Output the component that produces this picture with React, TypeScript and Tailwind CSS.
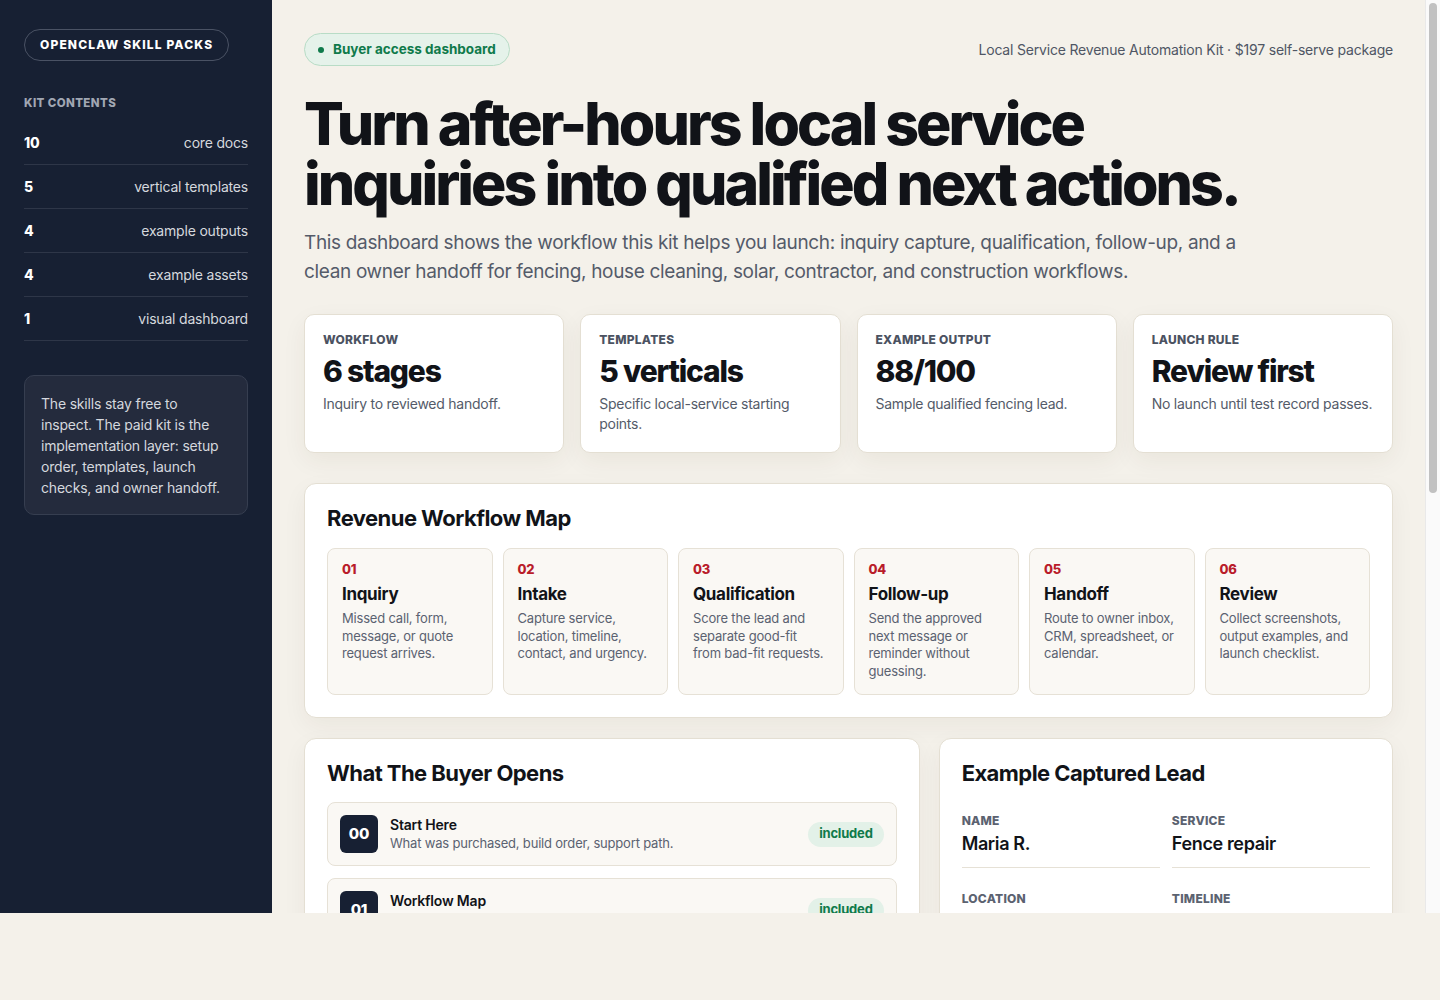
import React from "react";

const kit = [
  ["10", "core docs"],
  ["5", "vertical templates"],
  ["4", "example outputs"],
  ["4", "example assets"],
  ["1", "visual dashboard"],
];

const stats = [
  ["WORKFLOW", "6 stages", "Inquiry to reviewed handoff."],
  ["TEMPLATES", "5 verticals", "Specific local-service starting points."],
  ["EXAMPLE OUTPUT", "88/100", "Sample qualified fencing lead."],
  ["LAUNCH RULE", "Review first", "No launch until test record passes."],
];

const steps = [
  ["01", "Inquiry", "Missed call, form, message, or quote request arrives."],
  ["02", "Intake", "Capture service, location, timeline, contact, and urgency."],
  ["03", "Qualification", "Score the lead and separate good-fit from bad-fit requests."],
  ["04", "Follow-up", "Send the approved next message or reminder without guessing."],
  ["05", "Handoff", "Route to owner inbox, CRM, spreadsheet, or calendar."],
  ["06", "Review", "Collect screenshots, output examples, and launch checklist."],
];

const docs = [
  ["00", "Start Here", "What was purchased, build order, support path."],
  ["01", "Workflow Map", "The six stages from inquiry to reviewed handoff."],
  ["02", "Intake Fields", "Required fields for every captured request."],
  ["03", "Qualification Rules", "Scoring rubric for good-fit and bad-fit leads."],
  ["04", "Follow-up Scripts", "Approved messages and reminder timing."],
  ["05", "Owner Handoff", "Inbox, CRM, spreadsheet, or calendar routing."],
  ["06", "Vertical Templates", "Fencing, cleaning, solar, contractor, construction."],
  ["07", "Launch Checklist", "Test record, review pass, go-live steps."],
  ["08", "Example Outputs", "Sample scored leads and handoff notes."],
  ["09", "Support Path", "Where to ask questions after setup."],
];

const fields = [
  ["NAME", "Maria R."],
  ["SERVICE", "Fence repair"],
  ["LOCATION", "Austin, TX"],
  ["TIMELINE", "This week"],
  ["CONTACT", "Text preferred"],
  ["BUDGET", "$1,500–$3,000"],
  ["SOURCE", "Missed call"],
  ["SCORE", "88/100"],
];

export default function App() {
  return (
    <div className="min-h-[1000px] bg-[#f4f1ea] font-['Inter',sans-serif] tracking-[-0.012em] text-[#111318]">
      <div className="flex h-[913px]">
        <aside className="w-[272px] shrink-0 bg-[#172033] px-6 pt-[29px]">
          <div className="inline-flex h-8 items-center rounded-full border border-[#4a5264] px-[15px] text-[12px] font-extrabold tracking-[0.095em] text-white">
            OPENCLAW SKILL PACKS
          </div>
          <div className="mt-[34px] text-[11.5px] font-extrabold leading-4 tracking-[0.035em] text-[#a1a7b3]">
            KIT CONTENTS
          </div>
          <div className="mt-[10px]">
            {kit.map(([n, l]) => (
              <div key={l} className="flex h-11 items-center justify-between border-b border-[#2e3648] text-[14px] leading-5">
                <span className="font-extrabold text-white">{n}</span>
                <span className="text-[#d5d8de]">{l}</span>
              </div>
            ))}
          </div>
          <div className="mt-[34px] rounded-[10px] border border-[#363e50] bg-[#242b3d] px-4 pb-4 pt-[17px] text-[14px] leading-[21px] text-[#d5d8de]">
            The skills stay free to inspect. The paid kit is the implementation layer: setup order, templates, launch checks, and owner handoff.
          </div>
        </aside>

        <main className="min-w-0 flex-1 overflow-y-auto px-8 pb-8 pt-[33px]">
          <div className="flex items-center justify-between">
            <div className="inline-flex h-[33px] items-center gap-[9px] rounded-full border border-[#b8dcc6] bg-[#e5f2ea] px-[13px] text-[13.5px] font-bold tracking-normal text-[#0f7a4b]">
              <span className="h-1.5 w-1.5 rounded-full bg-[#0f7a4b]" />
              Buyer access dashboard
            </div>
            <div className="text-[14px] text-[#4f5664]">
              Local Service Revenue Automation Kit · $197 self-serve package
            </div>
          </div>

          <h1 className="mt-7 text-[59px] font-extrabold leading-[60px] tracking-[-0.05em] text-[#111318]">
            Turn after-hours local service
            <br />
            inquiries into qualified next actions.
          </h1>
          <p className="mt-3.5 max-w-[950px] text-[19px] leading-[29px] tracking-[-0.018em] text-[#545b69]">
            This dashboard shows the workflow this kit helps you launch: inquiry capture, qualification, follow-up, and a clean owner handoff for fencing, house cleaning, solar, contractor, and construction workflows.
          </p>

          <div className="mt-[28px] grid grid-cols-4 gap-4">
            {stats.map(([k, v, d]) => (
              <div key={k} className="rounded-[10px] border border-[#e4dfd3] bg-white py-[18px] pl-[18px] pr-[14px] shadow-[0_8px_24px_rgba(60,45,20,0.06)]">
                <div className="text-[12px] font-extrabold leading-[14px] tracking-[0.02em] text-[#4b5261]">{k}</div>
                <div className="mt-[6px] text-[30px] font-extrabold leading-9 tracking-[-0.04em] text-[#111318]">{v}</div>
                <div className="mt-[5px] text-[14px] leading-5 tracking-[-0.018em] text-[#545b69]">{d}</div>
              </div>
            ))}
          </div>

          <section className="mt-[30px] rounded-[12px] border border-[#e4dfd3] bg-white p-[22px] shadow-[0_8px_24px_rgba(60,45,20,0.05)]">
            <h2 className="text-[22px] font-bold leading-6 tracking-[-0.025em]">Revenue Workflow Map</h2>
            <div className="mt-[18px] grid grid-cols-6 gap-2.5">
              {steps.map(([n, t, d]) => (
                <div key={n} className="min-h-[147px] rounded-[8px] border border-[#e6e1d6] bg-[#faf8f4] pb-[14px] pl-[14px] pr-[16px] pt-[12px]">
                  <div className="text-[13px] font-extrabold leading-4 text-[#b91c2a]">{n}</div>
                  <div className="mt-[6px] text-[17px] font-bold leading-[22px] tracking-[-0.02em] text-[#111318]">{t}</div>
                  <div className="mt-[5px] text-[13px] leading-[17.5px] text-[#5b6271]">{d}</div>
                </div>
              ))}
            </div>
          </section>

          <div className="mt-5 grid grid-cols-[1.355fr_1fr] gap-[19px]">
            <section className="rounded-[12px] border border-[#e4dfd3] bg-white p-[22px] shadow-[0_8px_24px_rgba(60,45,20,0.05)]">
              <h2 className="text-[22px] font-bold leading-6 tracking-[-0.025em]">What The Buyer Opens</h2>
              <div className="mt-[17px] flex flex-col gap-3">
                {docs.map(([n, t, d]) => (
                  <div key={n} className="flex items-center gap-3 rounded-[8px] border border-[#e6e1d6] bg-[#faf8f4] p-3">
                    <div className="flex h-[38px] w-[38px] shrink-0 items-center justify-center rounded-[6px] bg-[#172033] text-[15px] font-extrabold text-white">
                      {n}
                    </div>
                    <div className="min-w-0 flex-1">
                      <div className="text-[14px] font-semibold leading-[18px] text-[#111318]">{t}</div>
                      <div className="text-[13px] leading-[18px] text-[#5b6271]">{d}</div>
                    </div>
                    <div className="flex h-[25px] items-center rounded-full bg-[#e3f1e8] px-[11px] text-[13px] font-bold text-[#0f7a4b]">
                      included
                    </div>
                  </div>
                ))}
              </div>
            </section>

            <section className="rounded-[12px] border border-[#e4dfd3] bg-white p-[22px] shadow-[0_8px_24px_rgba(60,45,20,0.05)]">
              <h2 className="text-[22px] font-bold leading-6 tracking-[-0.025em]">Example Captured Lead</h2>
              <div className="mt-[28px] grid grid-cols-2 gap-x-3 gap-y-[23px]">
                {fields.map(([k, v]) => (
                  <div key={k} className="border-b border-[#e6e1d6] pb-[11px]">
                    <div className="text-[12px] font-extrabold leading-4 tracking-[0.02em] text-[#5b6270]">{k}</div>
                    <div className="mt-[3px] text-[18px] font-semibold leading-6 tracking-[-0.02em] text-[#111318]">{v}</div>
                  </div>
                ))}
              </div>
              <div className="mt-6 rounded-[8px] border border-[#e6e1d6] bg-[#faf8f4] p-4">
                <div className="text-[12px] font-extrabold tracking-[0.02em] text-[#5b6270]">NEXT ACTION</div>
                <div className="mt-1 text-[14px] leading-5 text-[#545b69]">
                  Send the approved estimate-visit message and route the record to the owner inbox for review.
                </div>
              </div>
            </section>
          </div>

          <div className="mt-10 border-t border-[#e4dfd3] pt-5 text-[14px] leading-5 text-[#6b7280]">
            Questions after setup? Reply to your purchase email and include the record you tested.
          </div>
        </main>

        <div className="w-[15px] shrink-0 border-l border-[#e9e9e9] bg-[#fafafa] px-[3px] pt-[3px]">
          <div className="h-[490px] rounded-full bg-[#c1c1c1]" />
        </div>
      </div>
    </div>
  );
}
